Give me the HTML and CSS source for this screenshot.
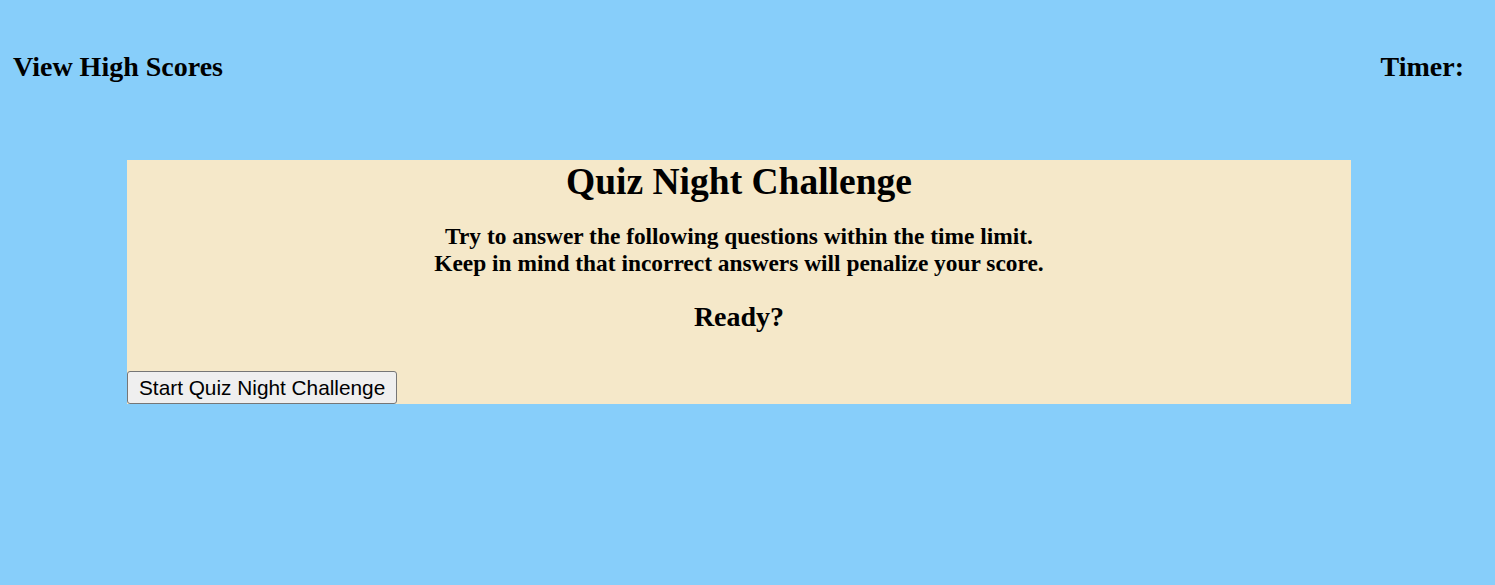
FILE: index.html
```html
<!DOCTYPE html>
<html>
<head>
<meta charset="utf-8">
<link rel="stylesheet" href="styles.css">
</head>
<body>
<header class="top">
  <h2 class="link">View High Scores</h2>
  <h2 class="timer">Timer: <span class="time"></span></h2>
</header>
<main class="card">
  <h1 class="title">Quiz Night Challenge</h1>
  <p class="intro">Try to answer the following questions within the time limit.<br>Keep in mind that incorrect answers will penalize your score.</p>
  <h3 class="ready">Ready?</h3>
  <button class="start">Start Quiz Night Challenge</button>
</main>
</body>
</html>
```
FILE: styles.css
```css
html, body {
  margin: 0;
  padding: 0;
  background: #87cefa;
  font-family: "Liberation Serif", "Times New Roman", serif;
  color: #000;
}
.top {
  display: flex;
  justify-content: space-between;
  align-items: center;
  padding: 48px 31px 0 13px;
}
.link, .timer {
  margin: 0;
  font-size: 28px;
  font-weight: bold;
  line-height: 38px;
}
.card {
  margin: 74px 144px 0 127px;
  background: #f5e8c9;
  display: flex;
  flex-direction: column;
  align-items: center;
}
.title {
  margin: 0;
  font-size: 37.5px;
  line-height: 44px;
}
.intro {
  margin: 18.5px 0 0;
  font-size: 23.4px;
  font-weight: bold;
  line-height: 27px;
  text-align: center;
}
.ready {
  margin: 25.5px 0 0;
  font-size: 28px;
  line-height: 30px;
}
.start {
  align-self: flex-start;
  margin-top: 39px;
  font-family: "Liberation Sans", Arial, sans-serif;
  font-size: 20.8px;
  line-height: 25px;
  padding: 3px 11px;
  background: #efefef;
  border: 1px solid #767676;
  border-radius: 3px;
  color: #000;
}
```
